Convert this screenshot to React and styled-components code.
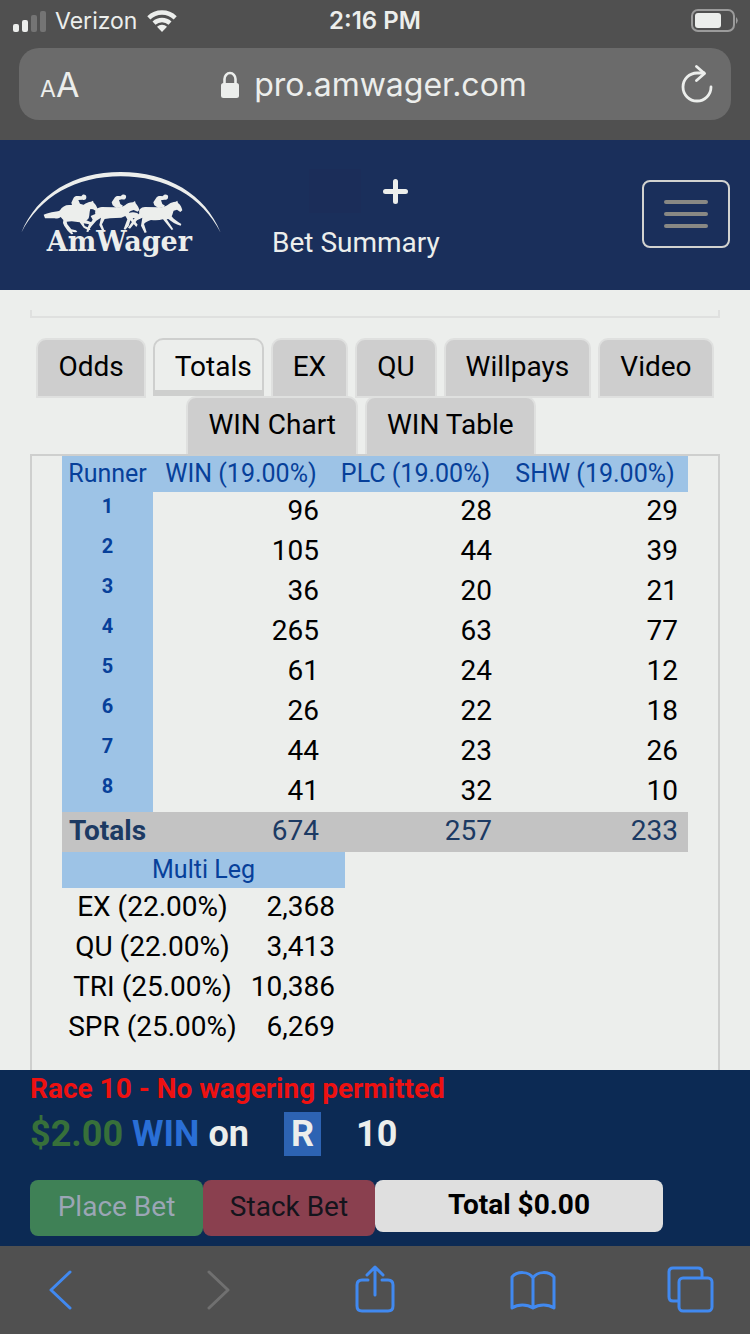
import React from "react";
import styled, { createGlobalStyle } from "styled-components";

const GlobalStyle = createGlobalStyle`
  * {
    box-sizing: border-box;
  }
  body {
    margin: 0;
    background-color: #eceeec;
    font-family: Roboto, "Liberation Sans", sans-serif;
    font-size: 28px;
    color: #000;
  }
  button {
    font-family: inherit;
    font-size: inherit;
    margin: 0;
    padding: 0;
    border: none;
    background: none;
    cursor: pointer;
  }
  svg {
    display: block;
  }
`;

const Page = styled.div`
  min-height: 100vh;
  display: flex;
  flex-direction: column;
`;

/* browser chrome */
const BrowserTop = styled.div`
  height: 140px;
  background-color: #505050;
  color: #eceeec;
  font-family: Inter, "Liberation Sans", sans-serif;
`;

const StatusBar = styled.div`
  height: 40px;
  padding: 2px 12px 0;
  display: grid;
  grid-template-columns: 1fr auto 1fr;
  align-items: center;
  font-size: 23px;
  line-height: 38px;
`;

const Carrier = styled.div`
  display: flex;
  align-items: center;
  gap: 9px;
`;

const Clock = styled.div`
  font-size: 24px;
  font-weight: 600;
`;

const BatteryBox = styled.div`
  display: flex;
  justify-content: flex-end;
`;

const AddressBar = styled.div`
  margin: 8px 19px 0;
  height: 72px;
  padding: 0 14px 0 21px;
  border-radius: 20px;
  background-color: #6b6b6b;
  display: grid;
  grid-template-columns: 40px 1fr 40px;
  align-items: center;
`;

const TextSizeButton = styled.button`
  padding-top: 6px;
  color: inherit;
  font-size: 34px;
  line-height: 40px;
  text-align: left;
  white-space: nowrap;
  small {
    font-size: 23px;
  }
`;

const Address = styled.div`
  padding: 2px 9px 0 0;
  display: flex;
  align-items: center;
  justify-content: center;
  gap: 15px;
  font-size: 32px;
  line-height: 40px;
`;

const ReloadButton = styled.button`
  color: inherit;
  display: flex;
  justify-content: center;
`;

const BrowserBottom = styled.nav`
  height: 88px;
  padding: 0 36px;
  background-color: #505050;
  display: flex;
  align-items: center;
  justify-content: space-between;
`;

const ToolButton = styled.button`
  width: 48px;
  height: 52px;
  color: ${(props) => (props.$off ? "#707070" : "#4189f0")};
`;

/* site header */
const Header = styled.header`
  height: 150px;
  padding: 0 20px 2px;
  background-color: #1a2f5b;
  color: #eceeec;
  display: flex;
  align-items: center;
`;

const LogoLink = styled.a`
  margin-right: 50px;
`;

const Summary = styled.button`
  padding-top: 2px;
  color: inherit;
  line-height: 36px;
  display: flex;
  flex-direction: column;
  align-items: center;
  gap: 12px;
`;

const SummaryIcons = styled.span`
  padding-left: 5px;
  display: flex;
  align-items: center;
  gap: 22px;
`;

const IconSlot = styled.span`
  width: 52px;
  height: 44px;
  background-color: #1b2d59;
`;

const MenuButton = styled.button`
  margin-left: auto;
  width: 88px;
  height: 68px;
  border: 2px solid #d2d3d0;
  border-radius: 8px;
  display: flex;
  flex-direction: column;
  align-items: center;
  justify-content: center;
  gap: 8px;
  span {
    width: 44px;
    height: 4px;
    border-radius: 2px;
    background-color: #888884;
  }
`;

/* pools */
const Main = styled.main`
  flex: 1;
  padding: 20px 30px 0;
  display: flex;
  flex-direction: column;
`;

const PreviousPanel = styled.div`
  height: 8px;
  margin-bottom: 20px;
  border: 2px solid #dfe0df;
  border-top: none;
`;

const TabRow = styled.div`
  display: flex;
  justify-content: center;
  gap: 7px;
  margin-bottom: -2px;
  padding-right: ${(props) => props.$inset || 0}px;
`;

const Tab = styled.button`
  height: 60px;
  padding: 0 20px 2px;
  border: 2px solid #dfe0df;
  border-radius: 10px 10px 0 0;
  background-color: #cecece;
  color: #000;
  line-height: 36px;
  white-space: nowrap;
  &[aria-selected="true"] {
    height: 58px;
    padding: 4px 10px 0 20px;
    border-color: #cecfce;
    border-bottom-width: 6px;
    background-color: #eceeec;
  }
`;

const Panel = styled.section`
  flex: 1;
  padding: 0 30px 20px;
  border: 2px solid #cecfce;
  border-bottom: none;
`;

const Table = styled.table`
  width: ${(props) => props.$width || "100%"};
  table-layout: fixed;
  border-collapse: collapse;
  line-height: 36px;
`;

const Col = styled.col`
  width: ${(props) => props.$width};
`;

const HeadCell = styled.th`
  height: 36px;
  padding: 0;
  background-color: #9dc3e6;
  color: #07409a;
  font-size: 25px;
  font-weight: 400;
`;

const Runner = styled.th`
  height: 40px;
  padding: 0;
  background-color: #9dc3e6;
  color: #07409a;
  font-size: 20px;
  line-height: 28px;
  vertical-align: top;
`;

const Cell = styled.td`
  height: 40px;
  padding: 0 10px 2px 0;
  text-align: right;
`;

const LegCell = styled.th`
  height: 40px;
  padding: 0 0 2px;
  font-weight: 400;
  white-space: nowrap;
`;

const TotalsRow = styled.tr`
  background-color: #c3c3c3;
  color: #1c3a63;
  th {
    padding: 0 0 2px 7px;
    text-align: left;
  }
`;

/* bet slip */
const BetSlip = styled.footer`
  height: 176px;
  padding: 0 30px 10px;
  background-color: #0c2a54;
  color: #eceeec;
  display: flex;
  flex-direction: column;
`;

const Warning = styled.div`
  color: #ee1111;
  font-weight: 700;
  line-height: 38px;
`;

const Bet = styled.div`
  margin-top: 4px;
  display: flex;
  align-items: center;
  gap: 9px;
  font-size: 36px;
  font-weight: 700;
  line-height: 44px;
`;

const Amount = styled.span`
  color: #37703a;
`;

const Pool = styled.span`
  color: #2a6fd6;
`;

const Track = styled.span`
  margin: 0 26px;
  padding: 0 7px;
  background-color: #2d63b3;
`;

const BetActions = styled.div`
  margin-top: 24px;
  display: flex;
  align-items: flex-start;
`;

const BetButton = styled.button`
  width: ${(props) => (props.$stack ? 172 : 173)}px;
  height: 56px;
  padding-bottom: 3px;
  border-radius: 8px;
  background-color: ${(props) => (props.$stack ? "#8a404f" : "#3f8156")};
  color: ${(props) => (props.$stack ? "#14141c" : "#9ba6b5")};
`;

const Total = styled.output`
  width: 288px;
  height: 52px;
  border-radius: 8px;
  background-color: #dfdfdf;
  color: #000;
  font-weight: 700;
  line-height: 50px;
  text-align: center;
`;

const runners = [
  [96, 28, 29],
  [105, 44, 39],
  [36, 20, 21],
  [265, 63, 77],
  [61, 24, 12],
  [26, 22, 18],
  [44, 23, 26],
  [41, 32, 10],
];

const legs = [
  ["EX (22.00%)", "2,368"],
  ["QU (22.00%)", "3,413"],
  ["TRI (25.00%)", "10,386"],
  ["SPR (25.00%)", "6,269"],
];

const Signal = () => (
  <svg width="34" height="22" viewBox="0 0 34 22" fill="#eceeec">
    <rect x="1" y="14" width="6" height="8" rx="2" />
    <rect x="10" y="10" width="6" height="12" rx="2" />
    <rect x="19" y="5" width="6" height="17" rx="2" fill="#747474" />
    <rect x="28" y="1" width="6" height="21" rx="2" fill="#747474" />
  </svg>
);

const Wifi = () => (
  <svg width="32" height="22" viewBox="0 0 32 22">
    <g fill="none" stroke="#eceeec" strokeWidth="4.4">
      <path d="M2.8 7.8a19 19 0 0 1 26.4 0" />
      <path d="M8 13.2a11.8 11.8 0 0 1 16 0" />
    </g>
    <path d="M16 22l-5-5.2a7.2 7.2 0 0 1 10 0z" fill="#eceeec" />
  </svg>
);

const Battery = () => (
  <svg width="48" height="24" viewBox="0 0 48 24">
    <rect x="2" y="1" width="42" height="21" rx="6" fill="none" stroke="#9b9b9b" strokeWidth="2" />
    <rect x="5" y="4" width="26" height="15" rx="3" fill="#eceeec" />
    <path d="M46 8q3.5 3.5 0 7z" fill="#9b9b9b" />
  </svg>
);

const Lock = () => (
  <svg width="18" height="28" viewBox="0 0 18 28">
    <path d="M3.5 13V8a5.5 6 0 0 1 11 0v5" fill="none" stroke="#eceeec" strokeWidth="2.6" />
    <rect y="12" width="18" height="15" rx="2.5" fill="#eceeec" />
  </svg>
);

const Reload = () => (
  <svg width="32" height="38" viewBox="0 0 32 38" fill="none" stroke="currentColor" strokeWidth="2.8" strokeLinecap="round" strokeLinejoin="round">
    <path d="M30 22a14 14 0 1 1-14-14h7" />
    <path d="M15.5 1.5l8 7-8 7" />
  </svg>
);

const ToolIcon = ({ children }) => (
  <svg width="48" height="52" viewBox="0 0 48 52" fill="none" stroke="currentColor" strokeWidth="3" strokeLinecap="round" strokeLinejoin="round">
    {children}
  </svg>
);

const Logo = () => (
  <svg width="202" height="90" viewBox="60 57 606 270" fill="#eceeec">
    <path d="M64 248C112 132 222 66 362 66S616 132 662 248C606 139 496 79 362 79S120 139 64 248z" />
    {/* left horse */}
    <path d="M131 194c10-4 20-8 33-9 7 0 12-1 16-4 6-10 15-16 27-16h16c9 3 20 3 28-1 8-6 14-8 22-9l6-3 2 6c6 5 9 11 12 19l-5 6-9-5-8-1c-3 9-2 17-4 24-1 5-4 8-8 10l13 5c4 2 4 5 3 9l-10 21-6-1 8-22-16-3 3 8 12 5 6 6-7 2-14-8-12-16-24-3-15 1 2 8 12 15 14 3 4 5-7 1-9-2 4 7-6 1-11-11-10-14-4-9 1-9-8-9c-6 5-14 5-22 4-9-1-15 0-25 0z" />
    <path d="M216 165l-2-7 7-15c3-5 8-6 14-5l9 1 4-5c7-1 12 2 11 9-1 6-6 8-11 6l-13 1 5 11 10 3-3 6-14 2z" />
    {/* middle horse */}
    <path d="M272 198l14-6c-3-12 6-20 20-21l36 1c11 1 24 0 33-6 6-6 14-8 24-9l6-4 2 7c6 7 9 12 11 20l-5 5-12-5c-6 2-13 3-14 9 6-2 14-3 24 0 8 3 5 9 0 14l-13 2 15 19-4 7-18-20-5 17-10 11-5-2 11-29-6-10-12 5-34 2-16 2-8 16 8 20-6 2-10-20 5-22-14 9-21 24-6-2 16-25z" />
    <path d="M338 166l-3-9 10-15c4-4 8-5 16-3l6-5c8-1 13 2 11 9-2 5-7 7-12 5l-9 2 4 12 8 5-4 5-16 2z" />
    {/* right horse */}
    <path d="M404 204l14-14c-3-11 4-18 17-19l42 1c12 0 22-3 30-10 6-5 12-6 20-7l5-3 2 7c8 6 11 13 13 22l-6 5-10-7-10 3c-3 6-3 12-6 17 5 9 16 14 29 23l-2 5c-15-4-27-11-37-20l-5 1 20 30-5 2-26-32c-11 3-22 3-36 2-8 3-18 6-21 12l8 25-6 2-11-22 4-24-16 8-21 25-6-3z" />
    <path d="M463 166l-3-9 10-15c4-4 9-5 17-3l6-5c8-1 13 2 11 9-1 5-6 7-11 6l-10 2 4 11 8 5-4 5-16 2z" />
    <text x="358" y="304" textAnchor="middle" fontFamily="'DejaVu Serif', serif" fontWeight="700" fontSize="81">AmWager</text>
  </svg>
);

const App = () => {
  return (
    <Page>
      <GlobalStyle />
      <BrowserTop>
        <StatusBar>
          <Carrier>
            <Signal />
            Verizon
            <Wifi />
          </Carrier>
          <Clock>2:16 PM</Clock>
          <BatteryBox>
            <Battery />
          </BatteryBox>
        </StatusBar>
        <AddressBar>
          <TextSizeButton aria-label="Text size">
            <small>A</small>A
          </TextSizeButton>
          <Address>
            <Lock />
            <span>pro.amwager.com</span>
          </Address>
          <ReloadButton aria-label="Reload">
            <Reload />
          </ReloadButton>
        </AddressBar>
      </BrowserTop>

      <Header>
        <LogoLink href="#" aria-label="AmWager">
          <Logo />
        </LogoLink>
        <Summary>
          <SummaryIcons>
            <IconSlot />
            <svg width="25" height="25" viewBox="0 0 25 25" stroke="#eceeec" strokeWidth="5" strokeLinecap="round">
              <path d="M12.5 2.5v20M2.5 12.5h20" />
            </svg>
          </SummaryIcons>
          Bet Summary
        </Summary>
        <MenuButton aria-label="Menu">
          <span />
          <span />
          <span />
        </MenuButton>
      </Header>

      <Main>
        <PreviousPanel />
        <div role="tablist">
          <TabRow>
            {["Odds", "Totals", "EX", "QU", "Willpays", "Video"].map((name) => (
              <Tab key={name} role="tab" aria-selected={name === "Totals"}>
                {name}
              </Tab>
            ))}
          </TabRow>
          <TabRow $inset={28}>
            <Tab role="tab" aria-selected={false}>WIN Chart</Tab>
            <Tab role="tab" aria-selected={false}>WIN Table</Tab>
          </TabRow>
        </div>
        <Panel>
          <Table>
            <colgroup>
              <Col $width="91px" />
              <Col $width="176px" />
              <Col $width="173px" />
              <Col />
            </colgroup>
            <thead>
              <tr>
                <HeadCell>Runner</HeadCell>
                <HeadCell>WIN (19.00%)</HeadCell>
                <HeadCell>PLC (19.00%)</HeadCell>
                <HeadCell>SHW (19.00%)</HeadCell>
              </tr>
            </thead>
            <tbody>
              {runners.map((amounts, index) => (
                <tr key={index}>
                  <Runner>{index + 1}</Runner>
                  {amounts.map((amount, i) => (
                    <Cell key={i}>{amount}</Cell>
                  ))}
                </tr>
              ))}
              <TotalsRow>
                <th>Totals</th>
                <Cell>674</Cell>
                <Cell>257</Cell>
                <Cell>233</Cell>
              </TotalsRow>
            </tbody>
          </Table>
          <Table $width="283px">
            <colgroup>
              <Col $width="181px" />
              <Col />
            </colgroup>
            <thead>
              <tr>
                <HeadCell colSpan={2}>Multi Leg</HeadCell>
              </tr>
            </thead>
            <tbody>
              {legs.map(([name, amount]) => (
                <tr key={name}>
                  <LegCell>{name}</LegCell>
                  <Cell>{amount}</Cell>
                </tr>
              ))}
            </tbody>
          </Table>
        </Panel>
      </Main>

      <BetSlip>
        <Warning>Race 10 - No wagering permitted</Warning>
        <Bet>
          <Amount>$2.00</Amount>
          <Pool>WIN</Pool>
          <span>on</span>
          <Track>R</Track>
          <span>10</span>
        </Bet>
        <BetActions>
          <BetButton>Place Bet</BetButton>
          <BetButton $stack>Stack Bet</BetButton>
          <Total>Total $0.00</Total>
        </BetActions>
      </BetSlip>

      <BrowserBottom>
        <ToolButton aria-label="Back">
          <ToolIcon>
            <path d="M34 8L15 26l19 18" />
          </ToolIcon>
        </ToolButton>
        <ToolButton $off aria-label="Forward">
          <ToolIcon>
            <path d="M15 8l19 18-19 18" />
          </ToolIcon>
        </ToolButton>
        <ToolButton aria-label="Share">
          <ToolIcon>
            <path d="M17 16h-6q-5 0-5 5v21q0 5 5 5h26q5 0 5-5V21q0-5-5-5h-6" />
            <path d="M24 31V3M16 11l8-8 8 8" />
          </ToolIcon>
        </ToolButton>
        <ToolButton aria-label="Bookmarks">
          <ToolIcon>
            <path d="M24 44V14c-4-7-16-7-21-1v31c6-4 15-4 21 0 6-4 15-4 21 0V13c-5-6-17-6-21 1" />
          </ToolIcon>
        </ToolButton>
        <ToolButton aria-label="Tabs">
          <ToolIcon>
            <path d="M12 37H7q-4 0-4-4V8q0-4 4-4h25q4 0 4 4v5" />
            <rect x="13" y="14" width="33" height="33" rx="4" />
          </ToolIcon>
        </ToolButton>
      </BrowserBottom>
    </Page>
  );
};

export default App;
